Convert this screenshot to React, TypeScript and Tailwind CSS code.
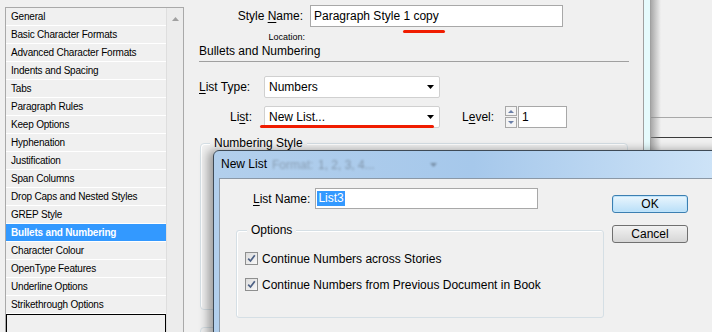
import React from "react";

const items = [
  "General",
  "Basic Character Formats",
  "Advanced Character Formats",
  "Indents and Spacing",
  "Tabs",
  "Paragraph Rules",
  "Keep Options",
  "Hyphenation",
  "Justification",
  "Span Columns",
  "Drop Caps and Nested Styles",
  "GREP Style",
  "Bullets and Numbering",
  "Character Colour",
  "OpenType Features",
  "Underline Options",
  "Strikethrough Options",
];

function DownArrow() {
  return (
    <svg width="7" height="4" viewBox="0 0 7 4">
      <path d="M0 0h7L3.5 4z" fill="#000" />
    </svg>
  );
}

function Dropdown({ value }: { value: string }) {
  return (
    <div className="flex h-[22px] w-[176px] items-center justify-between rounded-[2px] border border-[#d0d0d0] bg-white pl-[4px] pr-[5px]">
      <span>{value}</span>
      <DownArrow />
    </div>
  );
}

function Check() {
  return (
    <div className="flex h-[13px] w-[13px] items-center justify-center border border-[#8e8f8f] bg-gradient-to-br from-[#dcdcdc] to-[#f8f8f8]">
      <svg width="9" height="9" viewBox="0 0 9 9">
        <path d="M1.2 4.6 L3.5 7 L7.8 1.2" stroke="#4d6185" strokeWidth="1.7" fill="none" />
      </svg>
    </div>
  );
}

export default function App() {
  return (
    <div className="relative flex h-[332px] w-[712px] overflow-hidden bg-[#f0f0f0] font-['Liberation_Sans',Arial,sans-serif] text-[12px] text-black">
      {/* Left category list */}
      <div className="ml-[5px] mt-[7px] flex h-[400px] w-[179px] shrink-0 border border-[#a9a9a9] bg-[#f0f0f0]">
        <div className="flex w-[160px] flex-col">
          {items.map((t) => {
            const sel = t === "Bullets and Numbering";
            return (
              <div
                key={t}
                className={
                  sel
                    ? "h-[18px] shrink-0 border-b border-white bg-[#3399ff] pl-[5px] text-[10px] font-bold leading-[17px] tracking-[-0.2px] text-white"
                    : "h-[18px] shrink-0 border-b border-white pl-[5px] text-[10px] leading-[17px] tracking-[-0.2px] text-black"
                }
              >
                {t}
              </div>
            );
          })}
          <div className="h-[60px] w-[160px] shrink-0 border border-black bg-[#f0f0f0]" />
        </div>
        <div className="flex w-[17px] flex-col items-center border-l border-[#dedede] bg-[#ececec] pt-[9px]">
          <svg width="7" height="4" viewBox="0 0 7 4">
            <path d="M0 4h7L3.5 0z" fill="#a0a0a0" />
          </svg>
        </div>
      </div>

      {/* Main content */}
      <div className="ml-[15px] flex w-[430px] shrink-0 flex-col">
        <div className="mt-[5px] flex h-[22px] shrink-0 items-center">
          <div className="w-[107px] pr-[3px] text-right">
            Style <span className="underline underline-offset-2">N</span>ame:
          </div>
          <div className="ml-[4px] flex h-[22px] w-[253px] items-center border border-[#a8a8a8] bg-white pl-[3px]">
            Paragraph Style 1 copy
          </div>
        </div>
        <div className="mt-[4px] w-[106px] shrink-0 text-right text-[9px] leading-[12px]">Location:</div>
        <div className="h-[19px] shrink-0 border-b border-[#a0a0a0] leading-[16px]">Bullets and Numbering</div>

        <div className="mt-[14px] flex h-[22px] shrink-0 items-center">
          <div className="w-[65px]">
            <span className="underline underline-offset-2">L</span>ist Type:
          </div>
          <Dropdown value="Numbers" />
        </div>
        <div className="mt-[8px] flex h-[22px] shrink-0 items-center">
          <div className="w-[65px] pr-[12px] text-right">
            Li<span className="underline underline-offset-2">s</span>t:
          </div>
          <Dropdown value="New List..." />
          <div className="ml-[22px]">
            L<span className="underline underline-offset-2">e</span>vel:
          </div>
          <div className="ml-[11px] flex h-[22px] w-[12px] flex-col gap-[1px]">
            <div className="flex h-[10px] items-center justify-center border border-[#a8a8a8] bg-[#f4f4f4]">
              <svg width="6" height="3" viewBox="0 0 6 3">
                <path d="M0 3h6L3 0z" fill="#6a7fa8" />
              </svg>
            </div>
            <div className="flex h-[11px] items-center justify-center border border-[#a8a8a8] bg-[#f4f4f4]">
              <svg width="6" height="3" viewBox="0 0 6 3">
                <path d="M0 0h6L3 3z" fill="#6a7fa8" />
              </svg>
            </div>
          </div>
          <div className="ml-[1px] flex h-[22px] w-[49px] items-center border border-[#a8a8a8] bg-white pl-[3px]">1</div>
        </div>

        <div className="relative ml-[1px] mt-[15px] h-[167px] w-[428px] shrink-0 rounded-[4px] border border-[#d5dfe5] shadow-[inset_1px_1px_0_#ffffff]">
          <div className="absolute -top-[9px] left-[9px] bg-[#f0f0f0] px-[4px] leading-[16px]">Numbering Style</div>
        </div>
        <div className="ml-[1px] mt-[17px] h-[20px] w-[428px] shrink-0 rounded-t-[4px] border border-[#d5dfe5]" />
      </div>

      {/* Right edge bars */}
      <div className="ml-[14px] h-[150px] w-[8px] shrink-0 border-x border-[#a0a0a0] bg-[#e6fbfd]" />
      <div className="relative flex h-[150px] flex-1 flex-col">
        <div className="mt-[117px] border-t border-[#a8a8a8]" />
        <div className="mt-[19px] border-t border-[#3a3a3a]" />
        <div className="absolute left-0 top-0 h-[150px] w-[10px] bg-gradient-to-r from-[#8a8a8a] to-transparent opacity-70" />
      </div>

      {/* Red annotation underlines */}
      <div className="absolute left-[403px] top-[30px] h-[3px] w-[42px] rounded-full bg-[#f01c00]" />
      <div className="absolute left-[260px] top-[125px] h-[3px] w-[174px] rounded-full bg-[#f01c00]" />

      {/* New List dialog window */}
      <div className="absolute left-[213px] top-[150px] h-[200px] w-[520px] rounded-tl-[6px] border border-[#3e4a56] bg-gradient-to-r from-[#b2cfec] via-[#a6c8eb] to-[#d0e5f8] shadow-[-5px_0_10px_rgba(0,0,0,0.35)]">
        <div className="absolute left-[58px] top-[6px] text-[12px] leading-[16px] text-[#333] opacity-30 blur-[1.2px]">Format:</div>
        <div className="absolute left-[104px] top-[6px] text-[12px] leading-[16px] text-[#333] opacity-35 blur-[1.2px]">1, 2, 3, 4...</div>
        <div className="absolute left-[216px] top-[12px] opacity-30 blur-[1px]">
          <DownArrow />
        </div>
        <div className="absolute left-[7px] top-[5px] leading-[16px] text-black">New List</div>

        <div className="absolute left-[5px] top-[27px] flex h-[200px] w-[520px] border border-[#8b98a6] bg-[#f0f0f0]">
          <div className="flex w-[384px] flex-col pl-[16px] pt-[9px]">
            <div className="flex h-[21px] shrink-0 items-center pl-[17px]">
              <span>
                <span className="underline underline-offset-2">L</span>ist Name:
              </span>
              <div className="ml-[5px] flex h-[21px] w-[223px] items-center border border-[#a8a8a8] bg-white pl-[1px]">
                <span className="bg-[#3399ff] px-[1px] leading-[15px] text-white">List3</span>
              </div>
            </div>
            <div className="relative mt-[21px] h-[88px] w-[368px] shrink-0 rounded-[3px] border border-[#d5dfe5] pl-[8px] pt-[21px] shadow-[inset_1px_1px_0_#ffffff]">
              <div className="absolute -top-[9px] left-[10px] bg-[#f0f0f0] px-[4px] leading-[16px]">Options</div>
              <div className="flex h-[13px] items-center gap-[4px]">
                <Check />
                <span>Continue Numbers across Stories</span>
              </div>
              <div className="mt-[13px] flex h-[13px] items-center gap-[4px]">
                <Check />
                <span>Continue Numbers from Previous Document in Book</span>
              </div>
            </div>
          </div>
          <div className="ml-[8px] flex flex-col pt-[16px]">
            <div className="flex h-[18px] w-[76px] items-center justify-center rounded-[3px] border border-[#3c7fb1] bg-gradient-to-b from-[#eaf6fd] to-[#b9dff8] shadow-[inset_0_0_0_1px_#bfe4fb]">
              OK
            </div>
            <div className="mt-[12px] flex h-[18px] w-[76px] items-center justify-center rounded-[3px] border border-[#707070] bg-gradient-to-b from-[#f2f2f2] to-[#d6d6d6]">
              Cancel
            </div>
          </div>
        </div>
      </div>
    </div>
  );
}
